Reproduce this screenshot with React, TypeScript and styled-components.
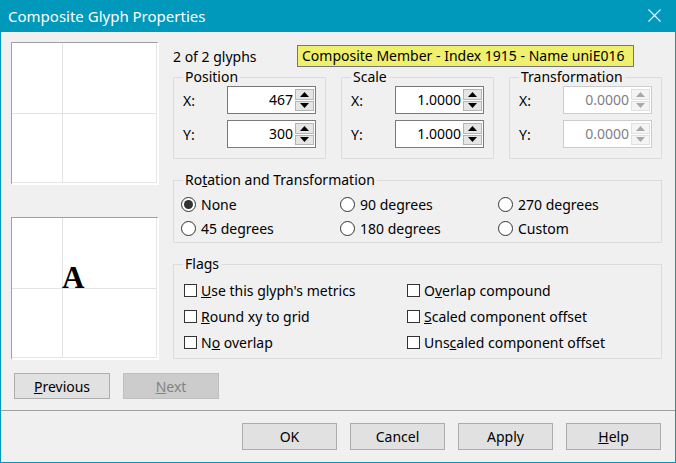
import React from "react";
import styled, { createGlobalStyle } from "styled-components";

const GlobalStyle = createGlobalStyle`
  html, body {
    margin: 0;
    padding: 0;
    background: #ffffff;
  }
  body {
    font-family: "Noto Sans", "Liberation Sans", sans-serif;
    font-size: 14px;
    color: #000;
  }
  * {
    box-sizing: border-box;
  }
`;

const Window = styled.div`
  width: 676px;
  height: 463px;
  display: flex;
  flex-direction: column;
`;

const TitleBar = styled.div`
  height: 32px;
  flex: none;
  background: #0098bb;
  color: #fff;
  display: flex;
  align-items: center;
  justify-content: space-between;
  padding: 0 15px 1px 8px;
  font-size: 15px;
`;

const Frame = styled.div`
  flex: 1;
  display: flex;
  flex-direction: column;
  background: #f0f0f0;
  border: 1px solid #0098bb;
  border-top: none;
`;

const Main = styled.div`
  display: flex;
  padding: 10px 13px 0 10px;
`;

const LeftColumn = styled.div`
  width: 148px;
  display: flex;
  flex-direction: column;
  gap: 32px;
`;

const Preview = styled.div`
  height: 143px;
  background: #fff;
  border-top: 1px solid #a0a0a0;
  border-left: 1px solid #a0a0a0;
  border-right: 2px solid #fff;
  border-bottom: 2px solid #fff;
  box-shadow: inset -1px -1px 0 #e6e6e6;
  svg {
    display: block;
  }
`;

const RightColumn = styled.div`
  position: relative;
  flex: 1;
  margin-left: 14px;
  display: flex;
  flex-direction: column;
`;

const Header = styled.div`
  padding-top: 4px;
  line-height: 22px;
  height: 26px;
`;

const Tooltip = styled.div`
  position: absolute;
  left: 124px;
  top: 3px;
  width: 337px;
  height: 22px;
  background: #f0f06f;
  border: 1px solid #767676;
  padding-left: 4px;
  line-height: 20px;
  white-space: nowrap;
`;

const GroupRow = styled.div`
  display: grid;
  grid-template-columns: repeat(3, 1fr);
  column-gap: 15px;
`;

const Group = styled.fieldset<{ $top?: number; $padTop?: number; $padBottom?: number }>`
  margin: ${(p) => p.$top ?? 0}px 0 0 0;
  padding: ${(p) => p.$padTop ?? 0}px 9px ${(p) => p.$padBottom ?? 10}px 9px;
  border: 1px solid #dcdcdc;
  min-width: 0;
  legend {
    padding: 0 2px;
    line-height: 18px;
  }
`;

const FieldRow = styled.div`
  display: flex;
  align-items: center;
  justify-content: space-between;
  height: 28px;
  & + & {
    margin-top: 6px;
  }
`;

const SpinBox = styled.div<{ $disabled?: boolean }>`
  width: 89px;
  height: 28px;
  display: flex;
  align-items: stretch;
  background: #fff;
  border: 1px solid ${(p) => (p.$disabled ? "#cccccc" : "#7a7a7a")};
  color: ${(p) => (p.$disabled ? "#7f7f86" : "#000")};
  padding: 2px 1px 2px 0;
`;

const SpinValue = styled.div`
  flex: 1;
  text-align: right;
  padding-right: 2px;
  line-height: 22px;
`;

const SpinButtons = styled.div`
  width: 19px;
  display: flex;
  flex-direction: column;
  gap: 1px;
`;

const SpinButton = styled.div<{ $disabled?: boolean }>`
  flex: 1;
  display: flex;
  align-items: center;
  justify-content: center;
  background: ${(p) => (p.$disabled ? "#f4f4f4" : "#e5e5e5")};
  border: 1px solid ${(p) => (p.$disabled ? "#e0e0e0" : "#b4b4b4")};
  svg {
    display: block;
  }
`;

const OptionGrid = styled.div<{ $cols: string; $rowHeight: number; $indent: number }>`
  display: grid;
  grid-template-columns: ${(p) => p.$cols};
  grid-auto-rows: ${(p) => p.$rowHeight}px;
  margin-left: ${(p) => p.$indent}px;
  align-items: center;
`;

const Option = styled.label`
  display: flex;
  align-items: center;
  white-space: nowrap;
`;

const RadioMark = styled.span<{ $checked?: boolean }>`
  width: 15px;
  height: 15px;
  border-radius: 50%;
  border: 1px solid #333;
  background: #fff;
  margin-right: 5px;
  display: flex;
  align-items: center;
  justify-content: center;
  &::after {
    content: "";
    width: 9px;
    height: 9px;
    border-radius: 50%;
    background: ${(p) => (p.$checked ? "#333" : "transparent")};
  }
`;

const CheckMark = styled.span`
  width: 13px;
  height: 13px;
  border: 1px solid #333;
  background: #fff;
  margin-right: 4px;
`;

const NavRow = styled.div`
  display: flex;
  gap: 13px;
  padding: 13px 0 0 13px;
`;

const Separator = styled.div`
  height: 1px;
  background: #a0a0a0;
  margin-top: 11px;
`;

const Footer = styled.div`
  display: flex;
  justify-content: flex-end;
  gap: 13px;
  padding: 12px 14px 0 0;
`;

const Button = styled.button<{ $width?: number; $height?: number }>`
  width: ${(p) => p.$width ?? 96}px;
  height: ${(p) => p.$height ?? 26}px;
  font-family: inherit;
  font-size: 14px;
  color: #000;
  background: #e1e1e1;
  border: 1px solid #adadad;
  padding: 0;
  &:disabled {
    background: #cccccc;
    border-color: #bfbfbf;
    color: #838383;
  }
`;

const SpinArrow = ({ up, disabled }: { up?: boolean; disabled?: boolean }) => (
  <svg width="9" height="5" viewBox="0 0 9 5">
    <polygon
      points={up ? "0,5 9,5 4.5,0" : "0,0 9,0 4.5,5"}
      fill={disabled ? "#a8a8a8" : "#000"}
    />
  </svg>
);

const Spin = ({ value, disabled }: { value: string; disabled?: boolean }) => (
  <SpinBox $disabled={disabled}>
    <SpinValue>{value}</SpinValue>
    <SpinButtons>
      <SpinButton $disabled={disabled}>
        <SpinArrow up disabled={disabled} />
      </SpinButton>
      <SpinButton $disabled={disabled}>
        <SpinArrow disabled={disabled} />
      </SpinButton>
    </SpinButtons>
  </SpinBox>
);

const PreviewGrid = ({ glyph }: { glyph?: string }) => (
  <svg width="145" height="140" viewBox="0 0 145 140">
    <line x1="50.5" y1="0" x2="50.5" y2="140" stroke="#e3e3e3" />
    <line x1="0" y1="70.5" x2="145" y2="70.5" stroke="#e3e3e3" />
    {glyph && (
      <text
        x="50"
        y="70"
        fontFamily="'Liberation Serif', serif"
        fontWeight="bold"
        fontSize="31"
        fill="#000"
      >
        {glyph}
      </text>
    )}
  </svg>
);

const CloseIcon = () => (
  <svg width="13" height="13" viewBox="0 0 13 13">
    <path d="M0.5 0.5 L12.5 12.5 M12.5 0.5 L0.5 12.5" stroke="#fff" strokeWidth="1.1" />
  </svg>
);

const groups = [
  { title: "Position", x: "467", y: "300" },
  { title: "Scale", x: "1.0000", y: "1.0000" },
  { title: "Transformation", x: "0.0000", y: "0.0000", disabled: true },
];

const rotations = [
  { label: "None", checked: true },
  { label: "90 degrees" },
  { label: "270 degrees" },
  { label: "45 degrees" },
  { label: "180 degrees" },
  { label: "Custom" },
];

const App = () => {
  return (
    <>
      <GlobalStyle />
      <Window>
        <TitleBar>
          <span>Composite Glyph Properties</span>
          <CloseIcon />
        </TitleBar>
        <Frame>
          <Main>
            <LeftColumn>
              <Preview>
                <PreviewGrid />
              </Preview>
              <Preview>
                <PreviewGrid glyph="A" />
              </Preview>
            </LeftColumn>
            <RightColumn>
              <Header>2 of 2 glyphs</Header>
              <Tooltip>Composite Member - Index 1915 - Name uniE016</Tooltip>
              <GroupRow>
                {groups.map((g) => (
                  <Group key={g.title}>
                    <legend>{g.title}</legend>
                    <FieldRow>
                      <span>X:</span>
                      <Spin value={g.x} disabled={g.disabled} />
                    </FieldRow>
                    <FieldRow>
                      <span>Y:</span>
                      <Spin value={g.y} disabled={g.disabled} />
                    </FieldRow>
                  </Group>
                ))}
              </GroupRow>
              <Group $top={12} $padTop={3} $padBottom={2}>
                <legend>
                  Ro<u>t</u>ation and Transformation
                </legend>
                <OptionGrid $cols="159px 158px 1fr" $rowHeight={24} $indent={-2}>
                  {rotations.map((r) => (
                    <Option key={r.label}>
                      <RadioMark $checked={r.checked} />
                      {r.label}
                    </Option>
                  ))}
                </OptionGrid>
              </Group>
              <Group $top={12} $padTop={4} $padBottom={3}>
                <legend>Flags</legend>
                <OptionGrid $cols="223px 1fr" $rowHeight={26} $indent={1}>
                  <Option>
                    <CheckMark />
                    <span>
                      <u>U</u>se this glyph's metrics
                    </span>
                  </Option>
                  <Option>
                    <CheckMark />
                    <span>
                      O<u>v</u>erlap compound
                    </span>
                  </Option>
                  <Option>
                    <CheckMark />
                    <span>
                      <u>R</u>ound xy to grid
                    </span>
                  </Option>
                  <Option>
                    <CheckMark />
                    <span>
                      <u>S</u>caled component offset
                    </span>
                  </Option>
                  <Option>
                    <CheckMark />
                    <span>
                      N<u>o</u> overlap
                    </span>
                  </Option>
                  <Option>
                    <CheckMark />
                    <span>
                      Uns<u>c</u>aled component offset
                    </span>
                  </Option>
                </OptionGrid>
              </Group>
            </RightColumn>
          </Main>
          <NavRow>
            <Button>
              <u>P</u>revious
            </Button>
            <Button disabled>
              <u>N</u>ext
            </Button>
          </NavRow>
          <Separator />
          <Footer>
            <Button $width={95} $height={27}>OK</Button>
            <Button $width={95} $height={27}>Cancel</Button>
            <Button $width={95} $height={27}>Apply</Button>
            <Button $width={95} $height={27}>
              <u>H</u>elp
            </Button>
          </Footer>
        </Frame>
      </Window>
    </>
  );
};

export default App;
